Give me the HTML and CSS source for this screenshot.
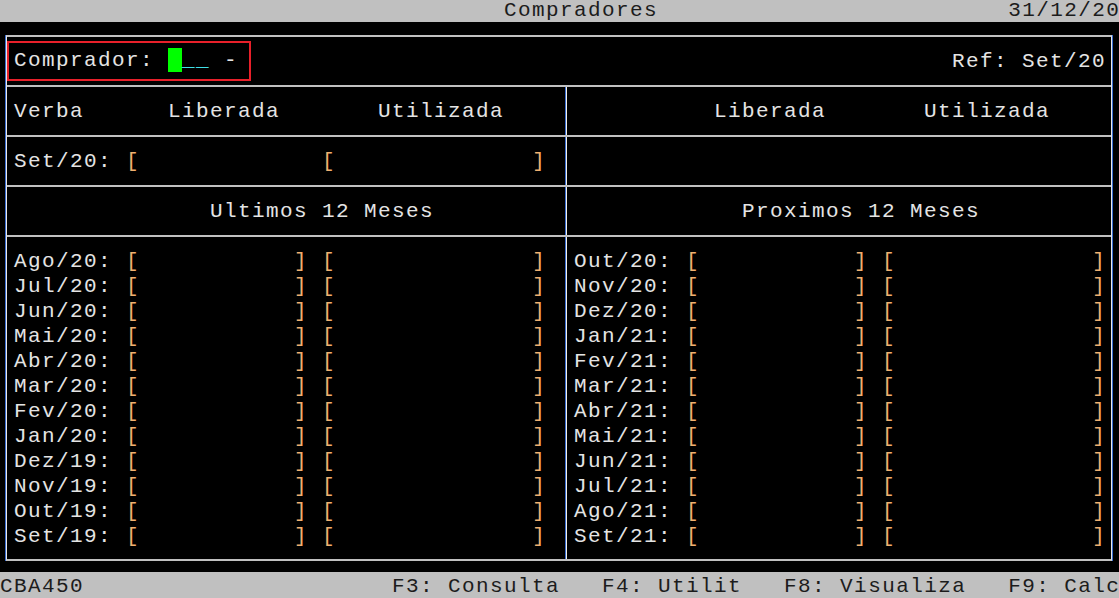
FILE: index.html
```html
<!DOCTYPE html>
<html lang="pt">
<head>
<meta charset="utf-8">
<title>Compradores</title>
<link rel="stylesheet" href="styles.css">
</head>
<body>
<div class="term">
  <div class="titlebar"><span class="pre">                                    Compradores                         31/12/20</span></div>
  <div class="screen">
    <div class="box">
      <div class="sec head">
        <div class="field"><span class="pre">Comprador: </span><span class="cursor"></span><span class="under">__</span><span class="pre"> -</span></div>
        <div class="ref">Ref: Set/20</div>
      </div>
      <div class="sec split">
        <div class="cell l"><span class="pre">Verba      Liberada       Utilizada</span></div>
        <div class="cell r"><span class="pre">          Liberada       Utilizada</span></div>
      </div>
      <div class="sec split">
        <div class="cell l"><span class="pre">Set/20: <b>[</b>             <b>[</b>              <b>]</b></span></div>
        <div class="cell r"></div>
      </div>
      <div class="sec split">
        <div class="cell l"><span class="pre">              Ultimos 12 Meses</span></div>
        <div class="cell r"><span class="pre">            Proximos 12 Meses</span></div>
      </div>
      <div class="split months">
        <div class="cell l">
          <div class="row">Ago/20: <b>[</b>           <b>]</b> <b>[</b>              <b>]</b></div>
          <div class="row">Jul/20: <b>[</b>           <b>]</b> <b>[</b>              <b>]</b></div>
          <div class="row">Jun/20: <b>[</b>           <b>]</b> <b>[</b>              <b>]</b></div>
          <div class="row">Mai/20: <b>[</b>           <b>]</b> <b>[</b>              <b>]</b></div>
          <div class="row">Abr/20: <b>[</b>           <b>]</b> <b>[</b>              <b>]</b></div>
          <div class="row">Mar/20: <b>[</b>           <b>]</b> <b>[</b>              <b>]</b></div>
          <div class="row">Fev/20: <b>[</b>           <b>]</b> <b>[</b>              <b>]</b></div>
          <div class="row">Jan/20: <b>[</b>           <b>]</b> <b>[</b>              <b>]</b></div>
          <div class="row">Dez/19: <b>[</b>           <b>]</b> <b>[</b>              <b>]</b></div>
          <div class="row">Nov/19: <b>[</b>           <b>]</b> <b>[</b>              <b>]</b></div>
          <div class="row">Out/19: <b>[</b>           <b>]</b> <b>[</b>              <b>]</b></div>
          <div class="row">Set/19: <b>[</b>           <b>]</b> <b>[</b>              <b>]</b></div>
        </div>
        <div class="cell r">
          <div class="row">Out/20: <b>[</b>           <b>]</b> <b>[</b>              <b>]</b></div>
          <div class="row">Nov/20: <b>[</b>           <b>]</b> <b>[</b>              <b>]</b></div>
          <div class="row">Dez/20: <b>[</b>           <b>]</b> <b>[</b>              <b>]</b></div>
          <div class="row">Jan/21: <b>[</b>           <b>]</b> <b>[</b>              <b>]</b></div>
          <div class="row">Fev/21: <b>[</b>           <b>]</b> <b>[</b>              <b>]</b></div>
          <div class="row">Mar/21: <b>[</b>           <b>]</b> <b>[</b>              <b>]</b></div>
          <div class="row">Abr/21: <b>[</b>           <b>]</b> <b>[</b>              <b>]</b></div>
          <div class="row">Mai/21: <b>[</b>           <b>]</b> <b>[</b>              <b>]</b></div>
          <div class="row">Jun/21: <b>[</b>           <b>]</b> <b>[</b>              <b>]</b></div>
          <div class="row">Jul/21: <b>[</b>           <b>]</b> <b>[</b>              <b>]</b></div>
          <div class="row">Ago/21: <b>[</b>           <b>]</b> <b>[</b>              <b>]</b></div>
          <div class="row">Set/21: <b>[</b>           <b>]</b> <b>[</b>              <b>]</b></div>
        </div>
      </div>
    </div>
  </div>
  <div class="statusbar"><span class="pre">CBA450                      F3: Consulta   F4: Utilit   F8: Visualiza   F9: Calc</span></div>
</div>
</body>
</html>
```

FILE: styles.css
```css
html, body {
  margin: 0;
  padding: 0;
  background: #000;
}

.term {
  width: 1119px;
  height: 598px;
  overflow: hidden;
  font-family: "Liberation Mono", "DejaVu Sans Mono", monospace;
  font-size: 21px;
  letter-spacing: 1.4px;
  line-height: 25px;
  color: #e4e4e4;
  display: flex;
  flex-direction: column;
}

.pre, .row, .ref {
  white-space: pre;
}

.titlebar {
  height: 22px;
  background: #c0c0c0;
  color: #1c1c1c;
  line-height: 22px;
  overflow: hidden;
}

.screen {
  background: #000;
  padding: 13px 0 11px 0;
}

.box {
  margin: 0 7px 0 6px;
  border-top: 2px solid #c0c0c0;
  border-bottom: 2px solid #c0c0c0;
  border-left: 1px solid #e8e8e8;
  border-right: 1px solid #e8e8e8;
  box-shadow: -1px 0 0 #3c6ed0, 1px 0 0 #3c6ed0;
}

.sec {
  height: 48px;
  border-bottom: 2px solid #c0c0c0;
}

.head {
  display: flex;
  justify-content: space-between;
  align-items: flex-start;
}

.field {
  margin-top: 4px;
  border: 2px solid #e8202a;
  padding: 5px 11px 6px 5px;
  display: flex;
  align-items: flex-start;
}

.cursor {
  display: inline-block;
  width: 14px;
  height: 24px;
  background: #00ff00;
}

.under {
  color: #40e0e8;
  white-space: pre;
}

.ref {
  margin-top: 12px;
  padding-right: 5px;
}

.split {
  display: grid;
  grid-template-columns: 559px 1fr;
}

.cell {
  padding-left: 7px;
  padding-top: 12px;
}

.cell.l {
  border-right: 1px solid #3c6ed0;
}

.cell.r {
  border-left: 1px solid #f0f0e8;
}

.months {
  height: 322px;
}

.months .cell {
  padding-top: 12px;
}

.row {
  height: 25px;
}

b {
  font-weight: normal;
  color: #f0b070;
}

.statusbar {
  height: 26px;
  background: #c0c0c0;
  color: #1c1c1c;
  padding-top: 3px;
  line-height: 23px;
  box-sizing: border-box;
  overflow: hidden;
}
```
